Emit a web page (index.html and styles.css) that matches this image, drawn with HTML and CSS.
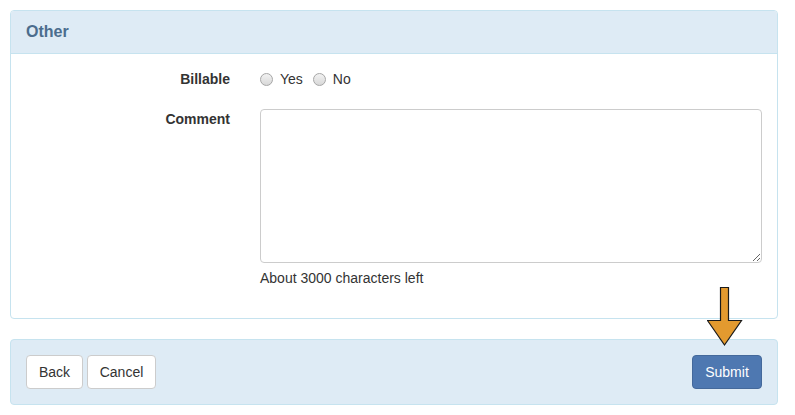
FILE: index.html
```html
<!DOCTYPE html>
<html>
<head>
<meta charset="utf-8">
<link rel="stylesheet" href="styles.css">
</head>
<body>
<div class="panel">
  <div class="panel-heading">Other</div>
  <div class="panel-body">
    <div class="row">
      <div class="label">Billable</div>
      <div class="field radios">
        <label class="radio"><span class="dot"></span>Yes</label>
        <label class="radio"><span class="dot"></span>No</label>
      </div>
    </div>
    <div class="row comment-row">
      <div class="label">Comment</div>
      <div class="field">
        <textarea class="comment"></textarea>
        <div class="help">About 3000 characters left</div>
      </div>
    </div>
  </div>
</div>
<div class="footer">
  <div class="left">
    <button class="btn btn-back">Back</button>
    <button class="btn btn-cancel">Cancel</button>
  </div>
  <div class="submit-wrap">
    <svg class="arrow" width="40" height="62" viewBox="0 0 40 62">
      <path d="M13.5 1.5 H21.5 V34.5 H34.5 L17.5 59 L0.5 34.5 H13.5 Z" fill="#e39a2f" stroke="#1a1a1a" stroke-width="1.2" stroke-linejoin="miter"/>
    </svg>
    <button class="btn btn-primary">Submit</button>
  </div>
</div>
</body>
</html>
```
FILE: styles.css
```css
* { box-sizing: border-box; }
body {
  margin: 0;
  padding: 10px 17px 10px 10px;
  font-family: "Liberation Sans", Arial, sans-serif;
  font-size: 14px;
  color: #333;
  background: #fff;
}
.panel {
  border: 1px solid #c6e3ef;
  border-radius: 4px;
  overflow: hidden;
}
.panel-heading {
  background: #deebf5;
  border-bottom: 1px solid #c6e3ef;
  height: 43px;
  padding: 0 15px;
  line-height: 42px;
  font-size: 16px;
  font-weight: bold;
  color: #4b6d8d;
}
.panel-body {
  padding: 15px 15px 31px 15px;
}
.row {
  display: grid;
  grid-template-columns: 204px 1fr;
  column-gap: 30px;
}
.label {
  text-align: right;
  font-weight: bold;
  line-height: 20px;
  color: #333;
}
.radios {
  display: flex;
  gap: 10px;
  align-items: center;
  height: 20px;
}
.radio {
  display: flex;
  align-items: center;
  gap: 7px;
  color: #333;
}
.dot {
  width: 13px;
  height: 13px;
  border-radius: 50%;
  border: 1px solid #a6a6a6;
  background: linear-gradient(#f2f2f2, #d8d8d8);
}
.comment-row {
  margin-top: 20px;
}
.comment {
  display: block;
  width: 502px;
  height: 154px;
  border: 1px solid #ccc;
  border-radius: 4px;
  resize: vertical;
  margin: 0;
  font-family: inherit;
}
.help {
  margin-top: 6px;
  line-height: 18px;
  color: #333;
}
.footer {
  margin-top: 20px;
  background: #deebf5;
  border: 1px solid #c6e3ef;
  border-radius: 4px;
  padding: 15px;
  display: flex;
  justify-content: space-between;
  align-items: center;
}
.left { display: flex; gap: 4px; }
.btn {
  height: 34px;
  padding: 0;
  font-family: inherit;
  font-size: 14px;
  color: #333;
  background: #fff;
  border: 1px solid #ccc;
  border-radius: 4px;
}
.btn-back { width: 57px; }
.btn-cancel { width: 69px; }
.btn-primary {
  background: #4e78b1;
  border-color: #44699b;
  color: #fff;
  width: 70px;
}
.submit-wrap {
  position: relative;
}
.arrow {
  position: absolute;
  left: 15px;
  top: -69px;
}
```
